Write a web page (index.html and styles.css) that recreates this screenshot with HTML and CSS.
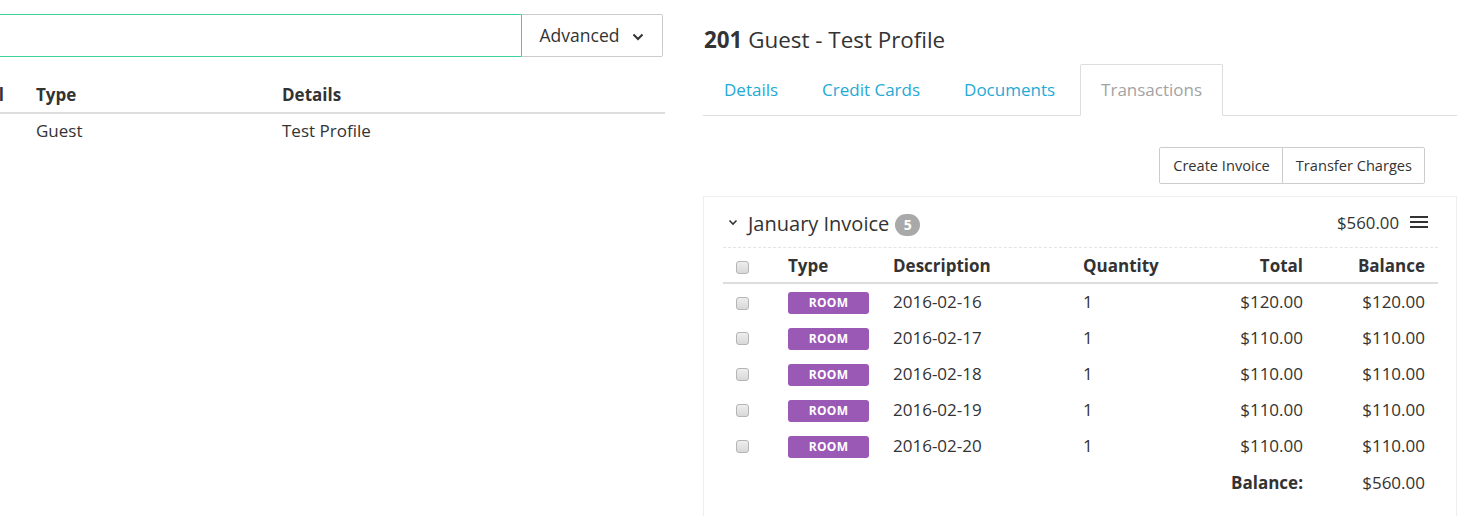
FILE: index.html
```html
<!DOCTYPE html>
<html>
<head>
<meta charset="utf-8">
<link rel="stylesheet" href="styles.css">
</head>
<body>
<div class="page">
  <section class="left">
    <div class="left-inner">
      <div class="search">
        <input class="search-input" type="text">
        <button class="adv-btn">Advanced
          <svg class="chev" width="12" height="8" viewBox="0 0 12 8"><path d="M1.5 1.5 L6 6 L10.5 1.5" fill="none" stroke="#333" stroke-width="2"/></svg>
        </button>
      </div>
      <table class="list">
        <thead>
          <tr><th class="c1">Label</th><th class="c2">Type</th><th>Details</th></tr>
        </thead>
        <tbody>
          <tr><td class="c1"></td><td class="c2">Guest</td><td>Test Profile</td></tr>
        </tbody>
      </table>
    </div>
  </section>

  <section class="right">
    <h2 class="title"><b>201</b> Guest - Test Profile</h2>
    <ul class="tabs">
      <li><a>Details</a></li>
      <li><a>Credit Cards</a></li>
      <li><a>Documents</a></li>
      <li class="active"><a>Transactions</a></li>
    </ul>
    <div class="actions">
      <div class="btn-group">
        <button class="btn">Create Invoice</button>
        <button class="btn">Transfer Charges</button>
      </div>
    </div>
    <div class="panel">
      <div class="inv-head">
        <div class="inv-title">
          <svg class="caret" width="10" height="7" viewBox="0 0 10 7"><path d="M1.5 1.5 L5 5 L8.5 1.5" fill="none" stroke="#333" stroke-width="1.6"/></svg>
          <span>January Invoice</span>
          <span class="badge">5</span>
        </div>
        <div class="inv-right">
          <span class="amount">$560.00</span>
          <svg class="menu" width="18" height="14" viewBox="0 0 18 14"><rect x="0" y="1" width="18" height="2" fill="#333"/><rect x="0" y="6" width="18" height="2" fill="#333"/><rect x="0" y="11" width="18" height="2" fill="#333"/></svg>
        </div>
      </div>
      <table class="items">
        <thead>
          <tr>
            <th class="k"><input type="checkbox" class="cb"></th>
            <th class="t">Type</th>
            <th class="d">Description</th>
            <th class="q">Quantity</th>
            <th class="num">Total</th>
            <th class="num last">Balance</th>
          </tr>
        </thead>
        <tbody>
          <tr><td class="k"><input type="checkbox" class="cb"></td><td><span class="label">ROOM</span></td><td>2016-02-16</td><td>1</td><td class="num">$120.00</td><td class="num last">$120.00</td></tr>
          <tr><td class="k"><input type="checkbox" class="cb"></td><td><span class="label">ROOM</span></td><td>2016-02-17</td><td>1</td><td class="num">$110.00</td><td class="num last">$110.00</td></tr>
          <tr><td class="k"><input type="checkbox" class="cb"></td><td><span class="label">ROOM</span></td><td>2016-02-18</td><td>1</td><td class="num">$110.00</td><td class="num last">$110.00</td></tr>
          <tr><td class="k"><input type="checkbox" class="cb"></td><td><span class="label">ROOM</span></td><td>2016-02-19</td><td>1</td><td class="num">$110.00</td><td class="num last">$110.00</td></tr>
          <tr><td class="k"><input type="checkbox" class="cb"></td><td><span class="label">ROOM</span></td><td>2016-02-20</td><td>1</td><td class="num">$110.00</td><td class="num last">$110.00</td></tr>
          <tr class="total"><td></td><td></td><td></td><td></td><td class="num strong">Balance:</td><td class="num last">$560.00</td></tr>
        </tbody>
      </table>
    </div>
  </section>
</div>
</body>
</html>
```

FILE: styles.css
```css
* { box-sizing: border-box; }
html, body { margin: 0; padding: 0; background: #fff; }
body {
  font-family: "Open Sans", "DejaVu Sans", sans-serif;
  font-size: 17px;
  color: #333;
  width: 1460px;
  height: 516px;
  overflow: hidden;
}
.page {
  display: flex;
  align-items: flex-start;
  gap: 38px;
}

/* left pane */
.left {
  width: 665px;
  flex: none;
  overflow: hidden;
  padding-top: 14px;
}
.left-inner {
  margin-left: -50px;
  width: 715px;
}
.search {
  display: flex;
  height: 43px;
  width: 713px;
}
.search-input {
  flex: 1;
  height: 43px;
  border: 1px solid #3dd39a;
  outline: none;
  margin: 0;
  font: inherit;
}
.adv-btn {
  width: 142px;
  height: 43px;
  margin: 0;
  margin-left: -1px;
  border: 1px solid #ccc;
  border-left-color: #3dd39a;
  border-radius: 0 2px 2px 0;
  background: #fff;
  font-family: inherit;
  font-size: 17.5px;
  color: #333;
  display: flex;
  align-items: center;
  justify-content: center;
  gap: 13px;
  padding: 0 0 1px 0;
}
.chev { margin-top: 3px; }

.list {
  width: 715px;
  border-collapse: collapse;
  margin-top: 23px;
}
.list th {
  text-align: left;
  font-weight: 700;
  padding: 0 8px 4px;
  height: 33px;
  vertical-align: middle;
  border-bottom: 2px solid #ddd;
}
.list td {
  padding: 0 8px 2px;
  height: 36px;
  vertical-align: middle;
}
.list .c1 { width: 78px; }
.list .c2 { width: 246px; }

/* right pane */
.right {
  width: 754px;
  flex: none;
}
.title {
  font-size: 22.4px;
  font-weight: 400;
  line-height: 30px;
  margin: 25px 0 9px 1px;
}
.title b { font-weight: 700; }
.tabs {
  list-style: none;
  margin: 0;
  padding: 0;
  display: flex;
  border-bottom: 1px solid #ddd;
}
.tabs li {
  margin-right: 2px;
  margin-bottom: -1px;
}
.tabs li:nth-child(3) { margin-right: 4px; }
.tabs a {
  display: block;
  padding: 0 20px 1px;
  line-height: 49px;
  border: 1px solid transparent;
  color: #1fa9d5;
  border-radius: 2px 2px 0 0;
}
.tabs .active a {
  color: #a3a3a3;
  border-color: #ddd;
  border-bottom-color: #fff;
  background: #fff;
}

.actions {
  display: flex;
  justify-content: flex-end;
  padding-right: 32px;
  margin-top: 31px;
}
.btn-group { display: flex; }
.btn {
  height: 37px;
  margin: 0;
  border: 1px solid #ccc;
  background: #fff;
  font-family: inherit;
  font-size: 14.6px;
  color: #333;
  padding: 0 12px 1px 13px;
}
.btn:first-child { border-radius: 2px 0 0 2px; }
.btn + .btn { margin-left: -1px; border-radius: 0 2px 2px 0; }

.panel {
  margin-top: 12px;
  border: 1px solid #eee;
  border-bottom: none;
  padding: 9px 18px 40px 19px;
}
.inv-head {
  display: flex;
  justify-content: space-between;
  align-items: center;
  height: 42px;
  border-bottom: 1px dashed #e4e4e4;
  padding-bottom: 6px;
}
.inv-title {
  display: flex;
  align-items: center;
  font-size: 20px;
  padding-left: 5px;
}
.caret { margin-right: 10px; margin-top: -3px; }
.badge {
  display: inline-block;
  background: #a9a9a9;
  color: #fff;
  font-size: 14px;
  font-weight: 700;
  min-width: 25px;
  height: 22px;
  line-height: 22px;
  text-align: center;
  border-radius: 11px;
  margin-left: 6px;
  margin-top: 2px;
}
.inv-right {
  display: flex;
  align-items: center;
  gap: 11px;
  padding-right: 10px;
  margin-top: -3px;
}
.amount { font-size: 16.8px; }

.items {
  width: 100%;
  border-collapse: collapse;
}
.items th {
  text-align: left;
  font-weight: 700;
  height: 35px;
  padding: 1px 8px 0;
  vertical-align: middle;
  border-bottom: 2px solid #ddd;
}
.items td {
  height: 36px;
  padding: 0 8px;
  vertical-align: middle;
}
.items .k { width: 57px; }
.items .t { width: 105px; }
.items .d { width: 190px; }
.items .q { width: 120px; }
.items .num { text-align: right; }
.items .last { padding-right: 13px; width: 127px; }
.items .strong { font-weight: 700; }
.items .total td { padding-top: 2px; }

.cb {
  appearance: none;
  -webkit-appearance: none;
  width: 13px;
  height: 13px;
  margin: 3px 3px 0 5px;
  border: 1px solid #b5b5b5;
  border-radius: 3px;
  background: linear-gradient(#eee, #d8d8d8);
  display: block;
}
.label {
  display: inline-block;
  width: 81px;
  height: 22px;
  line-height: 22px;
  background: #9b59b6;
  color: #fff;
  font-size: 12px;
  font-weight: 700;
  text-align: center;
  border-radius: 3px;
  letter-spacing: 0.3px;
}
```
